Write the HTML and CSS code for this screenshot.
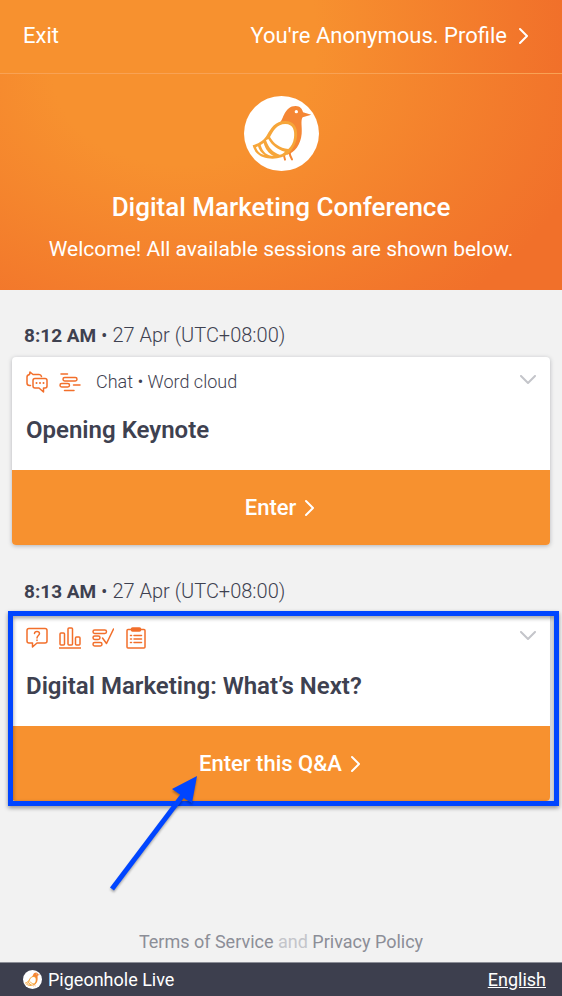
FILE: index.html
```html
<!DOCTYPE html>
<html lang="en">
<head>
<meta charset="utf-8">
<meta name="viewport" content="width=device-width, initial-scale=1">
<title>Digital Marketing Conference</title>
<link rel="stylesheet" href="styles.css">
</head>
<body>
<svg class="sprite" aria-hidden="true">
  <symbol id="bird" viewBox="39 32 225 225">
    <circle cx="151.500" cy="144.500" r="112.500" fill="#fff"/>
    <path d="M159 200q-1 14 3 23M175 196q1 16 8 26" fill="none" stroke="#f58634" stroke-width="6" stroke-linecap="round"/>
    <path d="M147 111C158 102 160 62 194 62C207 62 214 71 216 81L241 88L215 96C208 105 214 127 212 145C209 178 192 201 168 208Z" fill="#f58634"/>
    <circle cx="196" cy="79" r="5" fill="#fff"/>
    <path d="M65 180C86 174 99 164 108 149C119 130 132 107 163 107C190 107 201 129 198 154C195 178 180 197 174 204C158 217 133 223 110 219C84 214 69 199 65 180Z" fill="#f6a63a"/>
    <path d="M117 155C126 137 138 116 163 116C187 116 192 137 189 157C187 173 180 183 172 191C146 189 128 174 117 155Z" fill="#fff"/>
    <path d="M105 165L112 161C123 180 140 194 162 199C156 205 151 207 146 208C126 202 113 188 105 165Z" fill="#fff"/>
    <path d="M89 179L98 173C103 192 113 204 128 212C108 212 95 200 89 179Z" fill="#fff"/>
    <path d="M75 186L81 183C84 194 91 203 101 209C87 207 79 198 75 186Z" fill="#fff"/>
  </symbol>
  <symbol id="right" viewBox="0 0 10 18">
    <path d="M1 2l7 7-7 7" fill="none" stroke="currentColor" stroke-width="2" stroke-linecap="round" stroke-linejoin="round"/>
  </symbol>
  <symbol id="down" viewBox="0 0 18 10">
    <path d="M2 1l7 7 7-7" fill="none" stroke="currentColor" stroke-width="2" stroke-linecap="round" stroke-linejoin="round"/>
  </symbol>
</svg>

<header class="topbar">
  <a href="#exit">Exit</a>
  <a class="profile" href="#profile">You're Anonymous. Profile <svg class="right"><use href="#right"/></svg></a>
</header>

<section class="hero">
  <svg class="logo" role="img" aria-label="Event logo"><use href="#bird"/></svg>
  <h1>Digital Marketing Conference</h1>
  <p>Welcome! All available sessions are shown below.</p>
</section>

<main class="sessions">
  <section class="session">
    <p class="time"><strong>8:12 AM</strong> • 27 Apr (UTC+08:00)</p>
    <article class="card">
      <div class="details">
        <div class="meta">
          <svg class="icon" viewBox="0 0 22 22"><path d="M4.500 14.500H3.500Q1 14.500 1 12V6Q1 4 3.500 3.500L4 1l3 2.500h6q2 0 2.500 2"/><path d="M9 7.500h10q2 0 2 2V15q0 2-2 2h-1.500v4L13 17H9q-2 0-2-2V9.500q0-2 2-2z"/><path class="dots" d="M10.500 12h.01M14 12h.01M17.500 12h.01"/></svg>
          <svg class="icon" viewBox="0 0 22 22"><path d="M2 3h6.500M14.500 14H21M5.500 19.500H15"/><rect x="4" y="6.500" width="14" height="3.500" rx="1.700"/><rect x="1" y="12.500" width="9.500" height="3.500" rx="1.700"/></svg>
          <span>Chat • Word cloud</span>
          <button class="toggle" type="button" aria-label="Show details"><svg><use href="#down"/></svg></button>
        </div>
        <h2>Opening Keynote</h2>
      </div>
      <a class="enter" href="#keynote">Enter <svg class="right"><use href="#right"/></svg></a>
    </article>
  </section>

  <section class="session">
    <p class="time"><strong>8:13 AM</strong> • 27 Apr (UTC+08:00)</p>
    <article class="card">
      <div class="details">
        <div class="meta">
          <svg class="icon" viewBox="0 0 22 22"><path d="M3 1.500h16q2 0 2 2V14q0 2-2 2H11l-4.500 4V16H3q-2 0-2-2V3.500q0-2 2-2z"/><path d="M8.500 6.500q.2-2 2.500-2t2.500 2c0 2-2.500 2-2.500 4.500M11 13v.6"/></svg>
          <svg class="icon" viewBox="0 0 22 22"><path d="M0 21h22"/><rect x="1" y="6" width="4.500" height="12" rx="1"/><rect x="9" y="1" width="4.500" height="17" rx="1"/><rect x="16.500" y="10" width="4.500" height="8" rx="1"/></svg>
          <svg class="icon" viewBox="0 0 22 22"><rect x="1" y="3" width="13.500" height="3.500" rx="1.700"/><rect x="1" y="9" width="7" height="3.500" rx="1.700"/><rect x="1" y="15.500" width="9" height="3.500" rx="1.700"/><path d="M10.500 11l4 5.500L21.500 2"/></svg>
          <svg class="icon" viewBox="0 0 22 22"><path d="M6 2.500H3q-1 0-1 1V20q0 1 1 1h16q1 0 1-1V3.500q0-1-1-1h-3"/><path d="M9 8.500h7.500M9 12h7.500M9 15.500h7.500M5.500 8.500h1M5.500 12h1M5.500 15.500h1"/><rect class="solid" x="6.500" y="1" width="9" height="3" rx="1"/></svg>
          <button class="toggle" type="button" aria-label="Show details"><svg><use href="#down"/></svg></button>
        </div>
        <h2>Digital Marketing: What’s Next?</h2>
      </div>
      <a class="enter" href="#qna">Enter this Q&amp;A <svg class="right"><use href="#right"/></svg></a>
      <div class="highlight"></div>
      <svg class="arrow" viewBox="0 0 96 120" aria-hidden="true"><path d="M4 113L78 15" stroke="#0045ff" stroke-width="5"/><path d="M89 0L64 13L74 20L77 23L84 27Z" fill="#0045ff"/></svg>
    </article>
  </section>
</main>

<p class="legal"><a href="#terms">Terms of Service</a> and <a href="#privacy">Privacy Policy</a></p>
<footer class="footer">
  <a class="brand" href="#home"><svg><use href="#bird"/></svg>Pigeonhole Live</a>
  <a class="language" href="#language">English</a>
</footer>
</body>
</html>
```
FILE: styles.css
```css
* { box-sizing: border-box; }

body {
  display: flex;
  flex-direction: column;
  min-height: 100vh;
  margin: 0;
  background: #f2f2f2;
  color: #3e4150;
  font: 400 20px/24px Roboto, sans-serif;
}

h1, h2, p { margin: 0; }
a { color: inherit; text-decoration: none; }
svg { display: block; flex: none; }
.sprite { position: absolute; width: 0; height: 0; }
.right { width: 10px; height: 18px; }

.topbar {
  display: flex;
  align-items: center;
  justify-content: space-between;
  height: 74px;
  padding: 0 33px 1px 23px;
  border-bottom: 1px solid #f9a254;
  background: radial-gradient(circle at 20% 50%, #f7912f 45%, #f1702a 100%);
  color: #fff;
  font-size: 22px;
}

.profile { display: flex; align-items: center; gap: 12px; }

.hero {
  display: flex;
  flex-direction: column;
  align-items: center;
  padding: 22px 16px 29px;
  background: radial-gradient(ellipse 75% 140% at 32% 0, #f7912f 30%, #f1702a 100%);
  color: #fff;
  text-align: center;
}

.logo { width: 75px; height: 75px; }
.hero h1 { margin-top: 20px; font-size: 26px; line-height: 32px; font-weight: 500; }
.hero p { margin-top: 14px; font-size: 21px; }

.sessions {
  display: flex;
  flex-direction: column;
  gap: 34px;
  padding: 33px 12px 0;
}

.time { padding: 0 12px; margin-bottom: 9px; font-weight: 300; }
.time strong { font-size: 19px; font-weight: 700; }

.card {
  position: relative;
  border-radius: 4px;
  background: #fff;
  box-shadow: 0 1px 4px rgba(62, 65, 80, 0.35);
}

.details { padding: 14px 13px 23px 14px; }
.meta { display: flex; align-items: center; gap: 11px; height: 22px; font-size: 18px; font-weight: 300; }
.meta span { margin-left: 4px; }

.icon {
  width: 22px;
  height: 22px;
  fill: none;
  stroke: #f26f2b;
  stroke-width: 1.5;
  stroke-linecap: round;
  stroke-linejoin: round;
}
.dots { stroke-width: 2; }
.solid { fill: #f26f2b; }

.toggle {
  margin: 0 0 5px auto;
  padding: 0;
  border: 0;
  background: none;
  color: #c4c5ca;
}
.toggle svg { width: 18px; height: 10px; }

h2 { margin-top: 20px; font-size: 24px; line-height: 34px; font-weight: 600; }

.enter {
  display: flex;
  align-items: center;
  justify-content: center;
  gap: 9px;
  height: 75px;
  padding-right: 2px;
  border-radius: 0 0 4px 4px;
  background: #f7912f;
  color: #fff;
  font-size: 22px;
  font-weight: 500;
}

.highlight {
  position: absolute;
  inset: -2px -9px -5px -4px;
  border: 5px solid #0045ff;
  filter: drop-shadow(0 2px 2px rgba(0, 0, 0, 0.4));
  pointer-events: none;
}

.arrow {
  position: absolute;
  top: 163px;
  left: 96px;
  width: 96px;
  height: 120px;
  filter: drop-shadow(0 2px 1px rgba(0, 0, 0, 0.3));
  pointer-events: none;
}

.legal {
  margin-top: auto;
  padding: 24px 16px 8px;
  color: #c4c5ca;
  font-size: 18px;
  text-align: center;
}
.legal a { color: #8c8e97; }

.footer {
  display: flex;
  align-items: center;
  justify-content: space-between;
  height: 34px;
  padding: 0 16px 0 23px;
  border-top: 1px solid #8c8e97;
  background: #3d3f4e;
  color: #fff;
  font-size: 18px;
}
.brand { display: flex; align-items: center; gap: 6px; }
.brand svg { width: 19px; height: 19px; }
.language { text-decoration: underline; }
```
